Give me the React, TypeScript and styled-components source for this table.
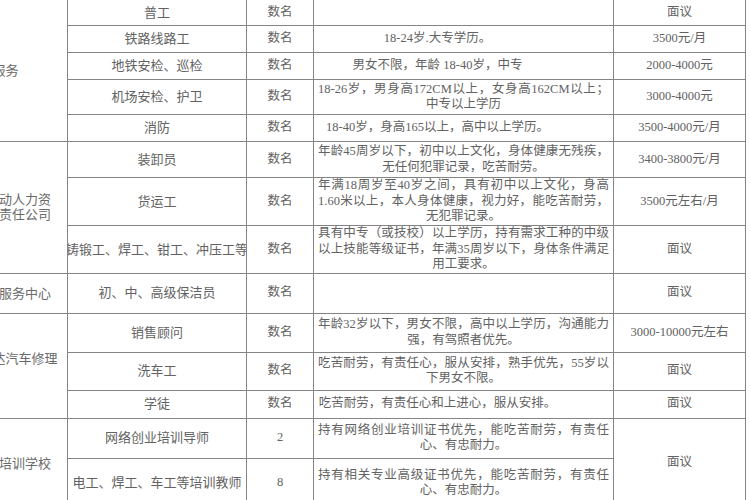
import React from "react";
import styled, { createGlobalStyle } from "styled-components";

const Global = createGlobalStyle`
  html, body { margin: 0; padding: 0; background: #ffffff; }
  body { width: 750px; height: 500px; overflow: hidden; }
`;

const Viewport = styled.div`
  width: 750px;
  height: 500px;
  overflow: hidden;
  background: #ffffff;
`;

const Table = styled.table`
  border-collapse: collapse;
  table-layout: fixed;
  width: 828px;
  margin-left: -83px;
  margin-top: -1px;
  font-family: "Liberation Serif", "Noto Sans CJK SC", serif;
  color: #626262;
  font-size: 12.5px;
`;

const Col = styled.col<{ $w: number }>`
  width: ${(p) => p.$w}px;
`;

const Row = styled.tr<{ $h: number }>`
  height: ${(p) => p.$h}px;
`;

const Cell = styled.td`
  border: 1px solid #848484;
  padding: 0 3px;
  text-align: center;
  vertical-align: middle;
  line-height: 15.5px;
  overflow: hidden;
`;

const OrgCell = styled(Cell)<{ $lift?: number }>`
  font-size: 13px;
  line-height: 15px;
  padding-bottom: ${(p) => p.$lift ?? 0}px;
  color: #6a6a6a;
`;

const JobCell = styled(Cell)`
  font-size: 13px;
  padding: 0;
`;

const Nowrap = styled.div`
  display: flex;
  justify-content: center;
  white-space: nowrap;
`;

const DescCell = styled(Cell)<{ $single?: boolean }>`
  font-size: 12.5px;
  text-align: ${(p) => (p.$single ? "center" : "justify")};
  text-align-last: center;
  padding: ${(p) => (p.$single ? "0 56px 0 4px" : "0 4px")};
`;

const PayCell = styled(Cell)`
  font-size: 12.5px;
`;

type Job = {
  h: number;
  name: string;
  count: string;
  desc: string;
  single?: boolean;
  pay?: string;
  paySpan?: number;
  org?: React.ReactNode;
  orgSpan?: number;
  orgLift?: number;
};

const jobs: Job[] = [
  { h: 26, name: "普工", count: "数名", desc: "", pay: "面议", org: "安保服务", orgSpan: 5 },
  { h: 27, name: "铁路线路工", count: "数名", desc: "18-24岁.大专学历。", single: true, pay: "3500元/月" },
  { h: 27, name: "地铁安检、巡检", count: "数名", desc: "男女不限，年龄 18-40岁，中专", single: true, pay: "2000-4000元" },
  { h: 35, name: "机场安检、护卫", count: "数名", desc: "18-26岁，男身高172CM以上，女身高162CM以上；中专以上学历", pay: "3000-4000元" },
  { h: 27, name: "消防", count: "数名", desc: "18-40岁，身高165以上，高中以上学历。", single: true, pay: "3500-4000元/月" },
  {
    h: 36, name: "装卸员", count: "数名",
    desc: "年龄45周岁以下，初中以上文化，身体健康无残疾，无任何犯罪记录，吃苦耐劳。",
    pay: "3400-3800元/月",
    org: (<>辉县鑫源劳动人力资<br />源服务有限责任公司</>),
    orgSpan: 3,
  },
  {
    h: 48, name: "货运工", count: "数名",
    desc: "年满18周岁至40岁之间，具有初中以上文化，身高1.60米以上，本人身体健康，视力好，能吃苦耐劳，无犯罪记录。",
    pay: "3500元左右/月",
  },
  {
    h: 47, name: "铸锻工、焊工、钳工、冲压工等", count: "数名",
    desc: "具有中专（或技校）以上学历，持有需求工种的中级以上技能等级证书，年满35周岁以下，身体条件满足用工要求。",
    pay: "面议",
  },
  { h: 40, name: "初、中、高级保洁员", count: "数名", desc: "", pay: "面议", org: "辉县市家政服务中心", orgSpan: 1 },
  {
    h: 39, name: "销售顾问", count: "数名",
    desc: "年龄32岁以下，男女不限，高中以上学历，沟通能力强，有驾照者优先。",
    pay: "3000-10000元左右",
    org: "辉县市众诚达汽车修理", orgSpan: 3, orgLift: 14,
  },
  { h: 38, name: "洗车工", count: "数名", desc: "吃苦耐劳，有责任心，服从安排，熟手优先，55岁以下男女不限。", pay: "面议" },
  { h: 28, name: "学徒", count: "数名", desc: "吃苦耐劳，有责任心和上进心，服从安排。", single: true, pay: "面议" },
  {
    h: 40, name: "网络创业培训导师", count: "2",
    desc: "持有网络创业培训证书优先，能吃苦耐劳，有责任心、有忠耐力。",
    pay: "面议", paySpan: 2,
    org: "辉县市新华培训学校", orgSpan: 2,
  },
  {
    h: 50, name: "电工、焊工、车工等培训教师", count: "8",
    desc: "持有相关专业高级证书优先，能吃苦耐劳，有责任心、有忠耐力。",
  },
];

const widths = [150, 179, 67, 300, 132];

export default function App() {
  return (
    <Viewport>
      <Global />
      <Table>
        <colgroup>
          {widths.map((w, i) => (
            <Col key={i} $w={w} />
          ))}
        </colgroup>
        <tbody>
          {jobs.map((j, i) => (
            <Row key={i} $h={j.h}>
              {j.org !== undefined && (
                <OrgCell rowSpan={j.orgSpan} $lift={j.orgLift}>
                  {j.org}
                </OrgCell>
              )}
              <JobCell>
                <Nowrap>{j.name}</Nowrap>
              </JobCell>
              <Cell>{j.count}</Cell>
              <DescCell $single={j.single}>{j.desc}</DescCell>
              {j.pay !== undefined && <PayCell rowSpan={j.paySpan}>{j.pay}</PayCell>}
            </Row>
          ))}
        </tbody>
      </Table>
    </Viewport>
  );
}
